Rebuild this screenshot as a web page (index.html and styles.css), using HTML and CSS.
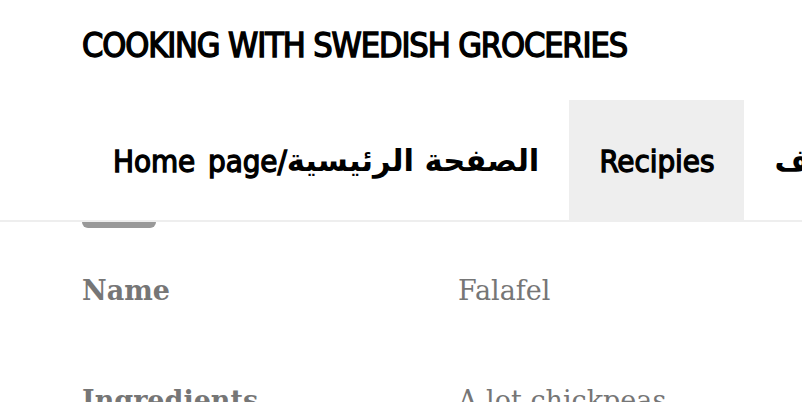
FILE: index.html
```html
<!DOCTYPE html>
<html lang="en">
<head>
<meta charset="utf-8">
<title>Cooking with Swedish groceries</title>
<link rel="stylesheet" href="styles.css">
</head>
<body>
<header class="site-header">
  <div class="brand">
    <h1 class="site-title">COOKING WITH SWEDISH GROCERIES</h1>
  </div>
  <nav class="main-nav">
    <a class="nav-item" href="#"><span class="en">Home page/</span><span class="ar" lang="ar">الصفحة الرئيسية</span></a>
    <a class="nav-item is-active" href="#"><span class="en">Recipies</span></a>
    <a class="nav-item" href="#"><span class="ar" lang="ar">اكتشف</span></a>
  </nav>
</header>
<main class="content">
  <div class="tab-stub"></div>
  <dl class="recipe-table">
    <dt class="label">Name</dt>
    <dd class="value">Falafel</dd>
    <dt class="label">Ingredients</dt>
    <dd class="value">A lot chickpeas</dd>
  </dl>
</main>
</body>
</html>
```

FILE: styles.css
```css
html, body {
  margin: 0;
  padding: 0;
  height: 100%;
  overflow: hidden;
  background: #fff;
}

.site-header {
  font-family: "DejaVu Sans Condensed", "Liberation Sans", "DejaVu Sans", sans-serif;
  color: #000;
}

.brand {
  height: 100px;
  box-sizing: border-box;
  padding: 28px 0 0 82px;
}

.site-title {
  margin: 0;
  font-size: 34px;
  line-height: 34px;
  font-weight: 400;
  letter-spacing: -1.1px;
  -webkit-text-stroke: 1.4px #000;
  white-space: nowrap;
}

.main-nav {
  display: flex;
  padding-left: 83px;
  border-bottom: 2px solid #eeeeee;
  white-space: nowrap;
  overflow: hidden;
}

.nav-item {
  display: flex;
  align-items: center;
  height: 120px;
  padding: 0 30px;
  color: #000;
  text-decoration: none;
  flex: none;
}

.nav-item .en {
  font-size: 31px;
  font-weight: 400;
  letter-spacing: -0.05px;
  word-spacing: 4px;
  -webkit-text-stroke: 1.3px #000;
  padding-top: 2px;
}

.nav-item .ar {
  font-family: "DejaVu Sans", sans-serif;
  font-size: 30.6px;
  font-weight: 700;
}

.nav-item.is-active {
  background: #eeeeee;
}

.content {
  padding-left: 82px;
  font-family: "DejaVu Serif", "Liberation Serif", serif;
  color: #767676;
}

.tab-stub {
  width: 74px;
  height: 6px;
  background: #999999;
  border-radius: 0 0 6px 6px;
}

.recipe-table {
  display: grid;
  grid-template-columns: 376px 1fr;
  row-gap: 70px;
  margin: 43px 0 0;
  font-size: 27px;
  line-height: 40px;
}

.label {
  margin: 0;
  font-weight: 700;
}

.value {
  margin: 0;
  font-weight: 400;
}
```
